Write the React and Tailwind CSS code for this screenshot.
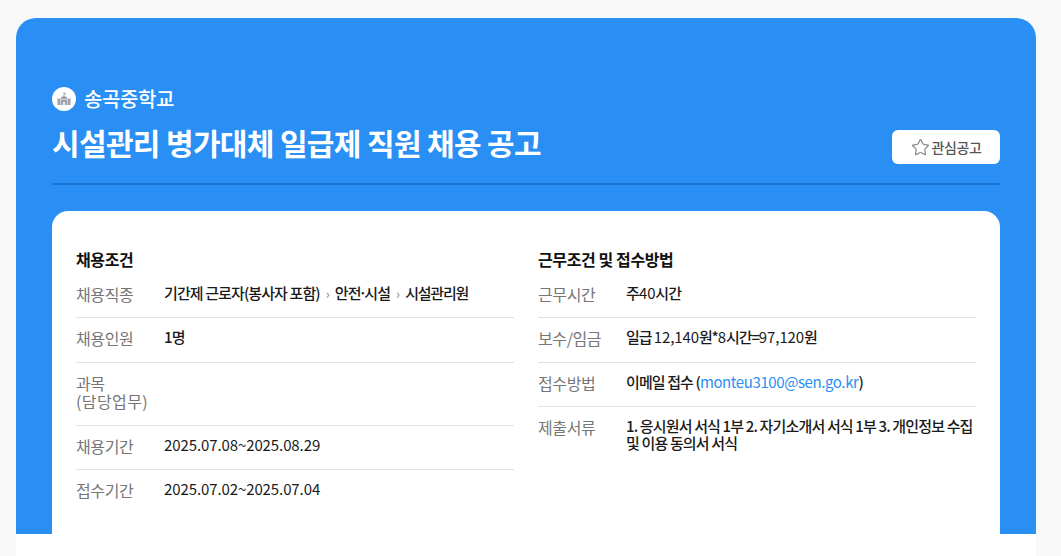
import React from 'react';
import { Star } from 'lucide-react';

const fontStack = "font-['Noto_Sans_CJK_KR','Noto_Sans',sans-serif]";

const SchoolIcon = () => (
    <span className="w-6 h-6 rounded-full bg-white flex items-center justify-center">
        <svg width="18" height="18" viewBox="0 0 18 18" fill="#9fa4ab">
            <path d="M8.600 2h.8v1.200h1.800v1.100H9.400v1.100l2.600 2V9H6V7.400l2.600-2z" />
            <path d="M2.500 8.500h3V15h-3zM12.500 8.500h3V15h-3zM6 9.500h6V15H9.800v-3H8.200v3H6z" />
        </svg>
    </span>
);

const Row = ({ label, children, last, tracking = 'tracking-[-0.9px]' }) => (
    <div className={`flex items-start ${last ? '' : 'border-b border-[#e1e1e1]'} pb-[14px]`}>
        <div className="w-[88px] shrink-0 pt-[11px] text-[16px] leading-[18.5px] text-[#767676] tracking-[-0.4px]">{label}</div>
        <div className={`flex-1 pt-[10px] text-[15px] leading-[17px] font-medium text-[#1a1a1a] ${tracking}`}>{children}</div>
    </div>
);

const Num = ({ children }) => <span className="font-normal tracking-[-0.1px]">{children}</span>;

const Sep = () => <span className="text-[#888] text-[13px] px-[6px] font-normal">›</span>;

export default function App() {
    return (
        <div className={`w-[1061px] h-[556px] overflow-hidden bg-[#f9f9f9] pt-[18px] pl-4 ${fontStack}`}>
            <div className="w-[1020px] bg-white rounded-t-[20px] h-[538px]">
                <div className="bg-[#298ff5] rounded-t-[20px] h-[516px] px-9 pt-[69px]">
                    <div className="flex items-center gap-2 h-6">
                        <SchoolIcon />
                        <span className="text-[20px] font-medium leading-6 text-white tracking-[-0.4px]">송곡중학교</span>
                    </div>
                    <div className="flex items-start justify-between mt-3 h-[41px] pb-[19px] border-b-2 border-[#1a73d0] box-content">
                        <h1 className="-mt-px text-[30px] font-bold leading-[40px] text-white tracking-[-0.65px]">시설관리 병가대체 일급제 직원 채용 공고</h1>
                        <button className="self-end w-[108px] h-[34px] bg-white rounded-md flex items-center justify-center gap-[2px] text-[14px] font-medium text-[#555] tracking-[-0.4px]">
                            <Star className="w-[19px] h-[19px] text-[#888]" strokeWidth={1.5} />
                            관심공고
                        </button>
                    </div>
                    <div className="mt-[26px] bg-white rounded-t-2xl px-6 pt-9 h-[345px] grid grid-cols-2 gap-6">
                        <div>
                            <h2 className="text-[16px] font-bold leading-6 mb-[2.5px] text-[#111] tracking-[-0.4px]">채용조건</h2>
                            <Row label="채용직종">기간제 근로자(봉사자 포함)<Sep />안전<span className="-mx-[2px]">·</span>시설<Sep /><span className="tracking-[-1.2px]">시설관리원</span></Row>
                            <Row label="채용인원">1명</Row>
                            <Row label={<>과목<br /><span className="tracking-[0.4px]">(담당업무)</span></>}></Row>
                            <Row label="채용기간"><Num>2025.07.08~2025.08.29</Num></Row>
                            <Row label="접수기간" last><Num>2025.07.02~2025.07.04</Num></Row>
                        </div>
                        <div>
                            <h2 className="text-[16px] font-bold leading-6 mb-[2.5px] text-[#111] tracking-[-0.4px]">근무조건 및 접수방법</h2>
                            <Row label="근무시간">주<Num>40</Num>시간</Row>
                            <Row label="보수/임금" tracking="tracking-[-1.1px]">일급 <Num>12,140</Num>원*<Num>8</Num>시간=<Num>97,120</Num>원</Row>
                            <Row label="접수방법">이메일 접수 (<span className="text-[#298ff5] font-normal tracking-[-0.4px]">monteu3100@sen.go.kr</span>)</Row>
                            <Row label="제출서류" last tracking="tracking-[-0.85px]">1. 응시원서 서식 1부 2. 자기소개서 서식 1부 3. 개인정보 수집 및 이용 동의서 서식</Row>
                        </div>
                    </div>
                </div>
            </div>
        </div>
    );
}
